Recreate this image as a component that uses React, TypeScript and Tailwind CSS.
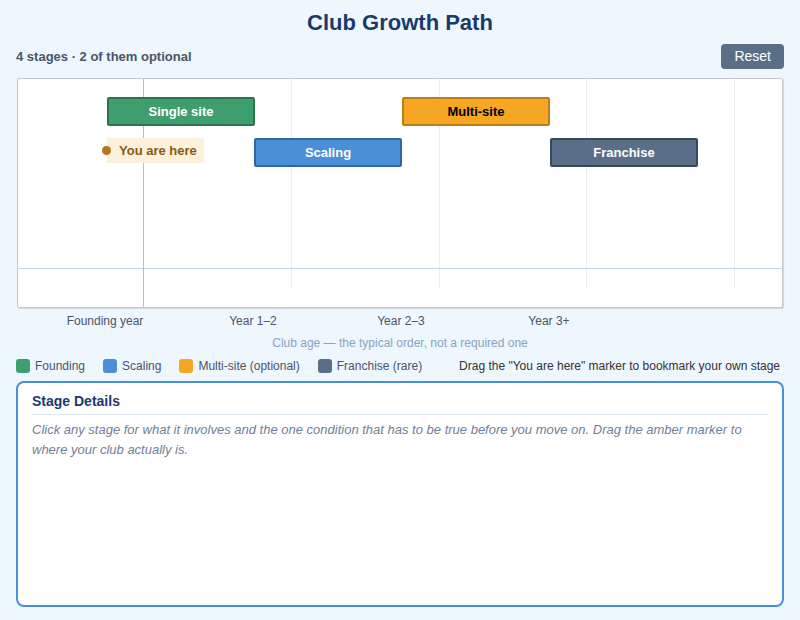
import React, { useState } from 'react';

type Stage = {
  id: string;
  label: string;
  left: number;
  top: number;
  className: string;
};

const stages: Stage[] = [
  { id: 'single', label: 'Single site', left: 89, top: 18, className: 'bg-[#3f9e6e] border-[#2c744f] text-white' },
  { id: 'scaling', label: 'Scaling', left: 236, top: 59, className: 'bg-[#4a8fd8] border-[#2f66a3] text-white' },
  { id: 'multi', label: 'Multi-site', left: 384, top: 18, className: 'bg-[#f5a623] border-[#bd7d17] text-black' },
  { id: 'franchise', label: 'Franchise', left: 532, top: 59, className: 'bg-[#5a6f87] border-[#34495e] text-white' },
];

const gridLines = [273, 421, 568, 716];
const ageLabels = ['Founding year', 'Year 1–2', 'Year 2–3', 'Year 3+'];

const legend = [
  { label: 'Founding', swatch: 'bg-[#3f9e6e]' },
  { label: 'Scaling', swatch: 'bg-[#4a8fd8]' },
  { label: 'Multi-site (optional)', swatch: 'bg-[#f5a623]' },
  { label: 'Franchise (rare)', swatch: 'bg-[#5a6f87]' },
];

const App = () => {
  const [selected, setSelected] = useState<string | null>(null);

  return (
    <div className="w-[800px] h-[620px] bg-[#eef6fe] px-4 font-['Liberation_Sans',Arial,sans-serif] overflow-hidden">
      <h1 className="pt-[10px] text-center text-[22px] leading-[26px] font-bold text-[#1b3a6b]">Club Growth Path</h1>

      <div className="flex justify-between items-center mt-[8px] h-[25px]">
        <span className="text-[13px] font-bold text-[#4a5568]">4 stages · 2 of them optional</span>
        <button
          className="h-[25px] px-[13px] rounded-[4px] bg-[#5a6f87] text-white text-[14px]"
          onClick={() => setSelected(null)}
        >
          Reset
        </button>
      </div>

      <div className="relative mt-[9px] ml-px mr-px h-[230px] bg-white border border-[#c3c8ce] rounded-[2px] shadow-[1px_1px_1px_rgba(0,0,0,0.12)]">
        {gridLines.map((x) => (
          <div key={x} className="absolute top-0 w-px h-[209px] bg-[#e8eef5]" style={{ left: x }} />
        ))}
        <div className="absolute left-0 right-0 top-[189px] h-px bg-[#c8d6e2]" />
        {/* marker line */}
        <div className="absolute top-0 bottom-0 left-[125px] w-px bg-[#bdbdbd]" />

        {stages.map((s) => (
          <button
            key={s.id}
            onClick={() => setSelected(s.id)}
            className={`absolute w-[148px] h-[29px] border-2 rounded-[2px] text-[13px] font-bold flex items-center justify-center ${s.className}`}
            style={{ left: s.left, top: s.top }}
          >
            {s.label}
          </button>
        ))}

        <div className="absolute left-[89px] top-[59px] w-[97px] h-[25px] bg-[#fdf1dc] flex items-center">
          <span className="absolute -left-[5px] w-[9px] h-[9px] rounded-full bg-[#b8761a]" />
          <span className="pl-[12px] text-[13px] font-bold text-[#8a5a14]">You are here</span>
        </div>
      </div>

      <div className="flex mt-[4px] h-[15px] text-[12px] text-[#4a5568]">
        <div className="w-[15px]" />
        {ageLabels.map((l) => (
          <div key={l} className="w-[148px] text-center">{l}</div>
        ))}
      </div>

      <div className="mt-[9px] text-center text-[12px] leading-[15px] text-[#8aa4c0]">
        Club age — the typical order, not a required one
      </div>

      <div className="flex items-center mt-[7px] h-[15px] text-[12px] text-[#4a5568]">
        {legend.map((g) => (
          <div key={g.label} className="flex items-center mr-[18px]">
            <span className={`w-[14px] h-[14px] rounded-[3px] mr-[5px] ${g.swatch}`} />
            {g.label}
          </div>
        ))}
        <span className="ml-auto mr-[4px] text-[#333]">Drag the "You are here" marker to bookmark your own stage</span>
      </div>

      <div className="mt-[8px] h-[226px] bg-white border-2 border-[#4a90d9] rounded-[8px] px-[14px] pt-[8px]">
        <h2 className="text-[14px] leading-[20px] font-bold text-[#1b3a6b] pb-[3px] border-b border-[#dde8f3]">Stage Details</h2>
        <p className="mt-[5px] text-[13px] leading-[20px] italic text-[#718096]">
          {selected
            ? stages.find((s) => s.id === selected)?.label
            : 'Click any stage for what it involves and the one condition that has to be true before you move on. Drag the amber marker to where your club actually is.'}
        </p>
      </div>
    </div>
  );
};

export default App;
